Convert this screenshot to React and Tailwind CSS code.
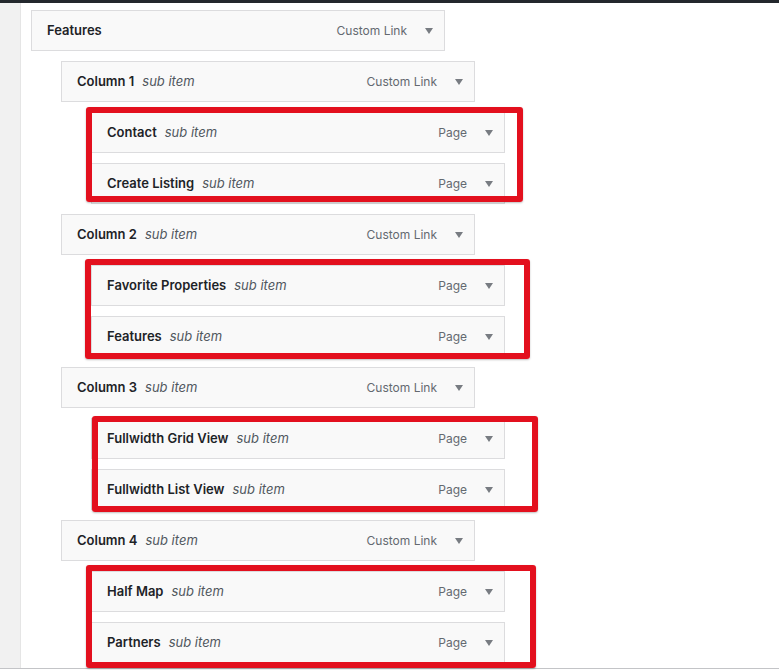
import React from "react";

const rows = [
  { title: "Features", depth: 0, type: "Custom Link" },
  { title: "Column 1", depth: 1, type: "Custom Link", sub: true },
  {
    group: true,
    box: "left-[-5px] top-[-5px] w-[437px] h-[95px]",
    items: [
      { title: "Contact", type: "Page" },
      { title: "Create Listing", type: "Page" },
    ],
  },
  { title: "Column 2", depth: 1, type: "Custom Link", sub: true },
  {
    group: true,
    box: "left-[-6px] top-[-6px] w-[445px] h-[100px]",
    items: [
      { title: "Favorite Properties", type: "Page" },
      { title: "Features", type: "Page" },
    ],
  },
  { title: "Column 3", depth: 1, type: "Custom Link", sub: true },
  {
    group: true,
    box: "left-[1px] top-[-2px] w-[446px] h-[96px]",
    items: [
      { title: "Fullwidth Grid View", type: "Page" },
      { title: "Fullwidth List View", type: "Page" },
    ],
  },
  { title: "Column 4", depth: 1, type: "Custom Link", sub: true },
  {
    group: true,
    box: "left-[-5px] top-[-6px] w-[450px] h-[103px]",
    items: [
      { title: "Half Map", type: "Page" },
      { title: "Partners", type: "Page" },
    ],
  },
];

const indent = ["ml-0", "ml-[30px]", "ml-[60px]"];

function Arrow() {
  return (
    <svg width="8" height="6" viewBox="0 0 8 6" className="ml-[18px]">
      <path d="M0 0 H8 L4 6 Z" fill="#787c82" />
    </svg>
  );
}

function MenuItem({ title, type, sub, depth }) {
  return (
    <div
      className={`${indent[depth]} w-[414px] h-[41px] flex items-center justify-between border border-[#dcdcde] bg-[#f9f9f9] pl-[15px] pr-[11px]`}
    >
      <div className="flex items-center text-[13px]">
        <span className="font-semibold text-[#1d2327]">{title}</span>
        {sub && <span className="ml-2 italic text-[#50575e]">sub item</span>}
      </div>
      <div className="flex items-center text-[12px] text-[#646970]">
        <span>{type}</span>
        <Arrow />
      </div>
    </div>
  );
}

export default function App() {
  return (
    <div
      className="h-[670px] w-[779px] flex flex-col bg-white overflow-hidden"
      style={{ fontFamily: "Inter, 'Noto Sans', sans-serif" }}
    >
      {/* Admin bar edge */}
      <div className="h-[3px] bg-[#23282d]" />

      <div className="flex flex-1 min-h-0">
        {/* Sidebar edge */}
        <div className="w-[21px] bg-[#f1f1f1] border-r border-[#e5e5e5]" />

        {/* Menu structure */}
        <div className="flex-1 pl-[10px] pt-[7px] flex flex-col gap-[10px]">
          {rows.map((row, i) =>
            row.group ? (
              <div key={i} className="relative ml-[60px] flex flex-col gap-[10px]">
                {row.items.map((it) => (
                  <MenuItem key={it.title} {...it} sub depth={0} />
                ))}
                <div
                  className={`absolute ${row.box} border-[6px] border-[#e3101e] rounded-[3px] shadow-[0_1px_2px_rgba(0,0,0,0.25)] pointer-events-none`}
                />
              </div>
            ) : (
              <MenuItem key={i} {...row} />
            )
          )}
        </div>
      </div>

      {/* Bottom edge */}
      <div className="h-[2px] border-t border-[#c3c4c7] bg-white" />
    </div>
  );
}
